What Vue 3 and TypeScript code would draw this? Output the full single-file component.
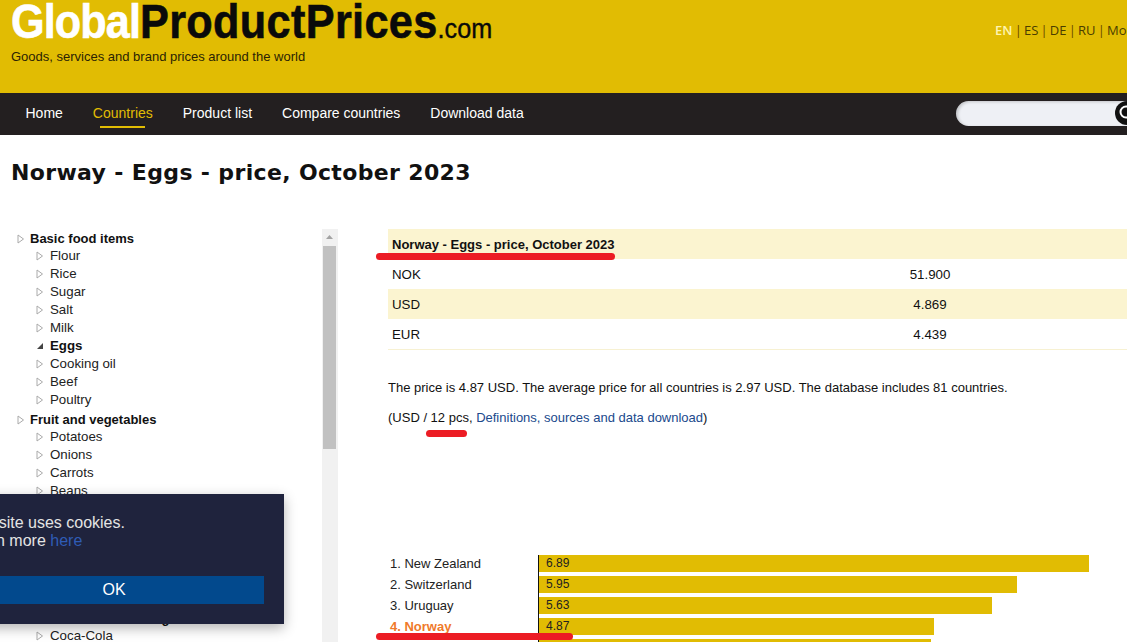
<script setup lang="ts">
interface TreeItem { label: string; active?: boolean }
interface TreeGroup { title: string; items: TreeItem[] }
const langs = ['ES', 'DE', 'RU', 'More']
const navs = ['Home', 'Countries', 'Product list', 'Compare countries', 'Download data']
const groups: TreeGroup[] = [
  { title: 'Basic food items', items: ['Flour', 'Rice', 'Sugar', 'Salt', 'Milk', 'Eggs', 'Cooking oil', 'Beef', 'Poultry'].map(label => ({ label, active: label === 'Eggs' })) },
  { title: 'Fruit and vegetables', items: ['Potatoes', 'Onions', 'Carrots', 'Beans', 'Tomatoes', 'Apples', 'Oranges', 'Bananas'].map(label => ({ label })) },
  { title: 'Other food', items: [{ label: 'Bread' }] },
  { title: 'Non-alcoholic beverages', items: [{ label: 'Coca-Cola' }] },
]
const prices = [
  { cur: 'NOK', val: '51.900' },
  { cur: 'USD', val: '4.869' },
  { cur: 'EUR', val: '4.439' },
]
const bars = [
  { name: '1. New Zealand', val: '6.89', w: 550 },
  { name: '2. Switzerland', val: '5.95', w: 478 },
  { name: '3. Uruguay', val: '5.63', w: 453 },
  { name: '4. Norway', val: '4.87', w: 395, hi: true },
  { name: '5. Denmark', val: '4.84', w: 392 },
]
</script>

<template>
  <div class="page">
    <header class="top">
      <div class="brand">
        <div class="logo"><span class="w">Global</span><span class="k">ProductPrices</span><span class="com">.com</span></div>
        <div class="tag">Goods, services and brand prices around the world</div>
      </div>
      <div class="langs">
        <b>EN</b><template v-for="l in langs" :key="l"><i>|</i><span>{{ l }}</span></template>
      </div>
    </header>
    <nav class="nav">
      <a v-for="n in navs" :key="n" :class="{ on: n === 'Countries' }">{{ n }}</a>
      <div class="search">
        <span class="go">
          <svg width="24" height="24" viewBox="0 0 24 24"><circle cx="12" cy="12" r="12" fill="#111"/><circle cx="11" cy="11" r="5.5" fill="none" stroke="#fff" stroke-width="2"/></svg>
        </span>
      </div>
    </nav>
    <h1>Norway - Eggs - price, October 2023</h1>
    <main class="body">
      <aside class="side">
        <div class="tree">
          <div v-for="g in groups" :key="g.title" class="group">
            <div class="gt">
              <svg class="tri" width="8" height="10" viewBox="0 0 8 10"><path d="M1 1l5.5 4L1 9z" fill="#fff" stroke="#aaa"/></svg>{{ g.title }}
            </div>
            <div v-for="it in g.items" :key="it.label" class="item" :class="{ act: it.active }">
              <svg v-if="it.active" class="tri" width="8" height="10" viewBox="0 0 8 10"><path d="M1 8h6V2z" fill="#444"/></svg>
              <svg v-else class="tri" width="8" height="10" viewBox="0 0 8 10"><path d="M1 1l5.5 4L1 9z" fill="#fff" stroke="#aaa"/></svg>{{ it.label }}
            </div>
          </div>
        </div>
        <div class="sb">
          <svg class="up" width="15" height="17" viewBox="0 0 15 17"><path d="M4 10l3.5-4L11 10z" fill="#a3a3a3"/></svg>
          <div class="thumb"></div>
        </div>
      </aside>
      <section class="main">
        <div class="tbl">
          <div class="row head"><span>Norway - Eggs - price, October 2023</span></div>
          <div v-for="(p, i) in prices" :key="p.cur" class="row" :class="{ alt: i === 1 }">
            <span>{{ p.cur }}</span><span class="val">{{ p.val }}</span>
          </div>
        </div>
        <p class="p1">The price is 4.87 USD. The average price for all countries is 2.97 USD. The database includes 81 countries.</p>
        <p class="p2">(USD / 12 pcs, <a>Definitions, sources and data download</a>)</p>
        <div class="chart">
          <div v-for="b in bars" :key="b.name" class="bar-row">
            <div class="nm" :class="{ hi: b.hi }">{{ b.name }}</div>
            <div class="track"><div class="bar" :style="{ width: b.w + 'px' }">{{ b.val }}</div></div>
          </div>
        </div>
      </section>
    </main>

    <div class="mark m1"></div>
    <div class="mark m2"></div>
    <div class="mark m3"></div>

    <div class="cookie">
      <div class="ctext">This site uses cookies.<br>Learn more <a>here</a></div>
      <button class="ok">OK</button>
    </div>
  </div>
</template>

<style>
html, body { margin: 0; overflow: hidden; background: #fff; }
</style>

<style scoped>
.page { position: relative; width: 1127px; height: 642px; overflow: hidden; font-family: "Liberation Sans", Arial, sans-serif; font-size: 14px; color: #111; }
.top { height: 93px; background: #e1bc03; display: flex; justify-content: space-between; box-sizing: border-box; }
.brand { padding-left: 11px; }
.logo { font-weight: 700; font-size: 48px; line-height: 40px; padding-top: 2px; white-space: nowrap; height: 40px; transform: scaleX(.9); transform-origin: left top; box-sizing: content-box; }
.logo .w { color: #fff; letter-spacing: -1px; -webkit-text-stroke: .6px #fff; }
.logo .k { color: #0a0a0a; letter-spacing: .4px; -webkit-text-stroke: .6px #0a0a0a; }
.logo .com { color: #0a0a0a; font-size: 28px; font-weight: 400; -webkit-text-stroke: .4px #0a0a0a; }
.tag { margin-top: 7px; font-size: 13px; line-height: 16px; color: #2b2303; }
.langs { margin-top: 22px; width: 132px; flex: none; font-family: "Open Sans", sans-serif; font-size: 13px; line-height: 16px; color: #4a3d00; white-space: nowrap; overflow: hidden; }
.langs b { color: #fff5b0; font-weight: 600; }
.langs i { font-style: normal; margin: 0 2.2px; color: #6b4a00; }
.nav { height: 42px; background: #231f20; display: flex; align-items: center; padding: 0 0 2px 25.5px; gap: 30px; position: relative; box-sizing: border-box; }
.nav a { color: #fff; line-height: 40px; position: relative; }
.nav a.on { color: #e1bc03; }
.nav a.on::after { content: ""; position: absolute; left: 7px; right: 8px; bottom: 5px; height: 2px; background: #e1bc03; }
.search { position: absolute; left: 956px; top: 8px; width: 190px; height: 25px; border-radius: 13px; background: #eef0f5; box-shadow: inset 2px 1px 3px rgba(0,0,0,.18); }
.go { position: absolute; left: 159px; top: 0; display: block; height: 25px; }
h1 { margin: 0; padding: 25px 0 0 11px; font-family: "DejaVu Sans", Verdana, sans-serif; font-weight: 700; font-size: 22px; line-height: 26px; color: #111; height: 69px; box-sizing: border-box; letter-spacing: 0.35px; white-space: nowrap; }
.body { display: flex; height: 413px; padding-top: 25px; box-sizing: border-box; position: relative; }
.side { width: 338px; flex: none; display: flex; padding-left: 17px; box-sizing: border-box; height: 420px; }
.tree { flex: 1; padding-top: 1px; overflow: hidden; }
.group { margin-bottom: 2px; }
.group:nth-child(3) { margin-bottom: 1px; }
.gt { height: 17px; line-height: 17px; font-weight: 700; font-size: 13px; display: flex; align-items: center; white-space: nowrap; }
.gt .tri { margin-right: 5px; }
.item { height: 18px; line-height: 18px; padding-left: 19px; display: flex; align-items: center; font-size: 13.3px; color: #222; }
.item .tri { margin-right: 6px; }
.item.act { font-weight: 700; color: #111; }
.sb { width: 16px; flex: none; background: #f1f1f1; position: relative; }
.up { display: block; }
.thumb { position: absolute; left: 1px; right: 2px; top: 17px; height: 203px; background: #c1c1c1; }
.main { flex: 1; padding-left: 50px; min-width: 0; }
.tbl { width: 780px; font-size: 13.3px; }
.row { height: 30px; display: grid; grid-template-columns: 304px 476px; align-items: center; }
.row > span:first-child { padding-left: 4px; }
.row .val { text-align: center; }
.row.alt, .row.head { background: #fbf4d0; }
.row.head { font-weight: 700; white-space: nowrap; font-size: 13px; }
.row:last-child { border-bottom: 1px solid #f7f1d2; }
.p1 { margin: 30px 0 0; font-size: 13px; line-height: 16px; white-space: nowrap; }
.p2 { margin: 14px 0 0; font-size: 13px; line-height: 16px; white-space: nowrap; }
.p2 a { color: #20498c; }
.chart { margin-top: 129px; }
.bar-row { display: flex; height: 21px; }
.nm { width: 150px; flex: none; padding-left: 2px; box-sizing: border-box; line-height: 17px; font-size: 13px; color: #222; }
.nm.hi { color: #f07a2a; font-weight: 700; }
.track { border-left: 1px solid #111; padding-bottom: 4px; flex: 1; }
.bar { height: 17px; background: #e1bc03; line-height: 17px; font-size: 12px; padding-left: 7px; box-sizing: border-box; color: #222; }
.mark { position: absolute; background: #ec1c24; border-radius: 5px; }
.m1 { left: 376px; top: 253px; width: 239px; height: 7px; }
.m2 { left: 426px; top: 430px; width: 41px; height: 7px; }
.m3 { left: 376px; top: 633px; width: 197px; height: 7px; }
.cookie { position: absolute; left: -56px; top: 494px; width: 340px; height: 130px; box-sizing: border-box; padding: 20px; background: #1f233d; box-shadow: 0 4px 12px rgba(0,0,0,.3); color: #e4e4e4; }
.ctext { font-size: 16px; line-height: 18px; height: 62px; }
.ctext a { color: #2f5cb6; }
.ok { display: block; width: 100%; height: 28px; border: 0; padding: 0; background: #02498d; color: #fff; font: 16px "Liberation Sans", Arial, sans-serif; }
</style>
